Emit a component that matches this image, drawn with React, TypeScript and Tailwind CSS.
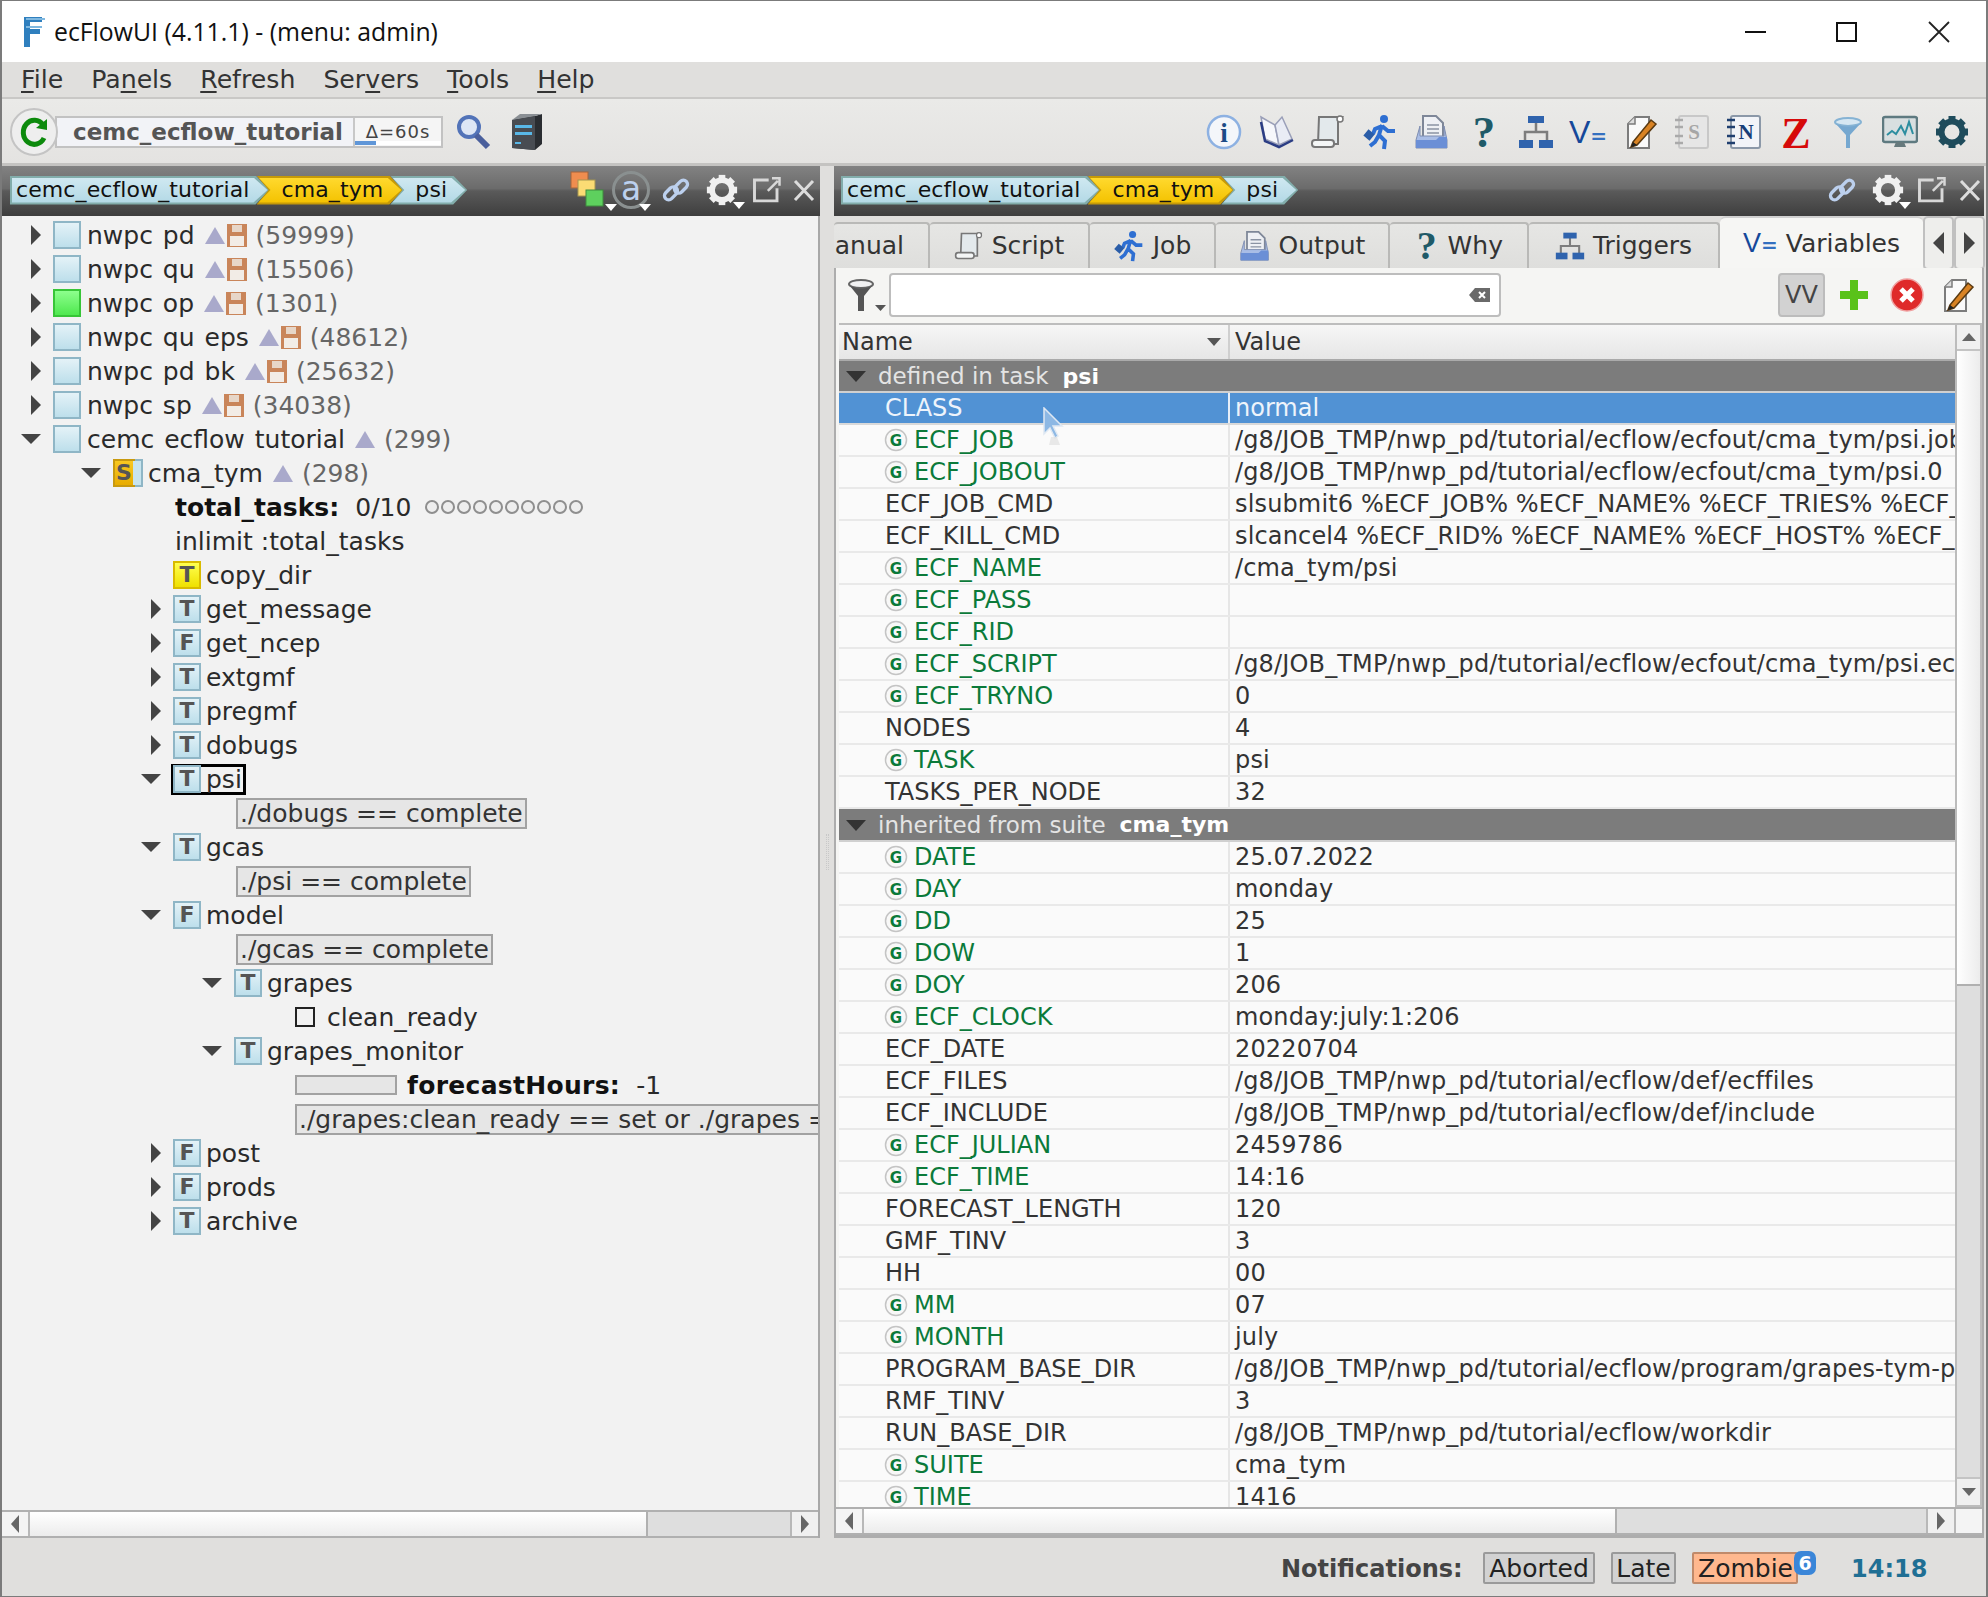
import type { ReactNode } from "react";

const SANS = "font-['DejaVu_Sans','Liberation_Sans',sans-serif]";

// ---------- small drawing helpers ----------

function Tri({ dir, w, h, color = "#444" }: { dir: "r" | "l" | "d" | "u"; w: number; h: number; color?: string }) {
  const pts = {
    r: `0,0 ${w},${h / 2} 0,${h}`,
    l: `${w},0 0,${h / 2} ${w},${h}`,
    d: `0,0 ${w},0 ${w / 2},${h}`,
    u: `0,${h} ${w},${h} ${w / 2},0`,
  }[dir];
  return (
    <svg width={w} height={h} className="shrink-0">
      <polygon points={pts} fill={color} />
    </svg>
  );
}

function Ico({ size = 36, children }: { size?: number; children: ReactNode }) {
  return (
    <svg width={size} height={size} viewBox="0 0 36 36" className="shrink-0">
      {children}
    </svg>
  );
}

function InfoIcon() {
  return (
    <Ico>
      <circle cx="18" cy="18" r="16" fill="#f4f6fa" stroke="#8db1e2" strokeWidth="2.5" />
      <text x="18" y="28" textAnchor="middle" fontFamily="Liberation Serif" fontWeight="700" fontSize="27" fill="#1d4b86">i</text>
    </Ico>
  );
}

function BookIcon() {
  return (
    <Ico>
      <path d="M3 3 L17 11 L21 31 L7 25 Z" fill="#f6f7fb" stroke="#9a9fb8" strokeWidth="1.5" />
      <path d="M17 11 L24 3 L34 25 L21 31 Z" fill="#e9ecf5" stroke="#9a9fb8" strokeWidth="1.5" />
      <path d="M3 8 L7 27 L21 33 L35 26" fill="none" stroke="#2b3d84" strokeWidth="2.5" />
    </Ico>
  );
}

function ScrollIcon({ size }: { size?: number }) {
  return (
    <Ico size={size}>
      <path d="M9 3 H32 L28 8 V30 H8 Z" fill="#e3e9ec" stroke="#777" strokeWidth="2" />
      <rect x="2" y="26" width="22" height="7" rx="3" fill="#f4f6f6" stroke="#777" strokeWidth="2" />
      <circle cx="30" cy="5" r="3" fill="#fff" stroke="#777" strokeWidth="1.5" />
    </Ico>
  );
}

function RunIcon({ size }: { size?: number }) {
  return (
    <Ico size={size}>
      <circle cx="22" cy="5" r="4" fill="#2e6fd2" />
      <path d="M20 11 L17 21 L23 27 L22 35 M17 21 L13 28 L8 32 M20 12 L26 17 L33 17 M20 12 L13 15 L11 20" fill="none" stroke="#2e6fd2" strokeWidth="4" />
      <rect x="3" y="17" width="8" height="8" transform="rotate(40 7 21)" fill="#2a5da8" />
    </Ico>
  );
}

function OutputIcon({ size }: { size?: number }) {
  return (
    <Ico size={size}>
      <path d="M9 2 H22 L29 9 V24 H9 Z" fill="#eef0f4" stroke="#7e8798" strokeWidth="2" />
      <path d="M13 11 H25 M13 15 H25 M13 19 H25" stroke="#8a93a3" strokeWidth="1.5" />
      <path d="M6 12 V22 H30 V12 L33 26 V34 H2 V26 Z" fill="#a9bde6" stroke="#7e8db0" strokeWidth="1" />
      <path d="M2 26 H22 L25 23 H33 V34 H2 Z" fill="#6b8fd6" />
    </Ico>
  );
}

function WhyIcon({ size = 36 }: { size?: number }) {
  return (
    <span
      className="flex shrink-0 items-center justify-center font-['Liberation_Serif',serif] font-bold text-[#1f5a68]"
      style={{ width: size * 0.8, height: size, fontSize: size * 1.25, lineHeight: 1 }}
    >
      ?
    </span>
  );
}

function TreeIcon({ size }: { size?: number }) {
  return (
    <Ico size={size}>
      <path d="M18 8 V18 M7 28 V18 H29 V28" fill="none" stroke="#7d7d7d" strokeWidth="2.5" />
      <rect x="10" y="2" width="16" height="7" fill="#2f63ad" />
      <rect x="1" y="26" width="14" height="8" fill="#2f63ad" />
      <rect x="21" y="26" width="14" height="8" fill="#2f63ad" />
    </Ico>
  );
}

function VarIcon({ small }: { small?: boolean }) {
  return (
    <span className={`flex shrink-0 items-baseline text-[#15489a] ${small ? "text-[27px]" : "text-[32px]"} leading-none`}>
      <span className="font-['Liberation_Sans',sans-serif]">V</span>
      <span className="text-[20px] font-bold text-[#3470c0]">=</span>
    </span>
  );
}

function EditIcon() {
  return (
    <Ico>
      <path d="M6 10 L13 3 H27 V34 H6 Z" fill="#fafafa" stroke="#7c7c7c" strokeWidth="2" />
      <path d="M6 10 H13 V3" fill="#ddd" stroke="#7c7c7c" strokeWidth="1.5" />
      <path d="M11 28 L29 6 L34 10 L15 31 L9 33 Z" fill="#d98324" stroke="#5a3a12" strokeWidth="1.5" />
      <path d="M9 33 L11 28 L15 31 Z" fill="#222" />
    </Ico>
  );
}

function NoteIcon({ letter, dark }: { letter: string; dark?: boolean }) {
  return (
    <Ico>
      <rect x="5" y="2" width="29" height="32" rx="2" fill={dark ? "#f2f4f8" : "#e6e6e6"} stroke={dark ? "#8b98a8" : "#c8c8c8"} strokeWidth="2" />
      {[6, 13, 22, 29].map((y) => (
        <path key={y} d={`M1 ${y} H9`} stroke={dark ? "#1f3f6f" : "#aaaaaa"} strokeWidth="2.5" />
      ))}
      <text x="20" y="25" textAnchor="middle" fontFamily="Liberation Serif" fontWeight="700" fontSize="21" fill={dark ? "#183e78" : "#a6a6a6"}>
        {letter}
      </text>
    </Ico>
  );
}

function ZIcon() {
  return (
    <Ico>
      <text x="18" y="34" textAnchor="middle" fontFamily="Liberation Serif" fontWeight="700" fontSize="44" fill="#d60a0a">Z</text>
    </Ico>
  );
}

function FunnelIcon() {
  return (
    <Ico>
      <ellipse cx="18" cy="8" rx="13" ry="4" fill="#d6e7f2" stroke="#86b3d4" strokeWidth="2" />
      <path d="M6 10 L16 21 V34 H20 V21 L30 10 Q18 15 6 10 Z" fill="#76a8d0" />
    </Ico>
  );
}

function MonitorIcon() {
  return (
    <Ico>
      <rect x="1" y="3" width="34" height="25" rx="2" fill="#d8dfe0" stroke="#5e7a80" strokeWidth="2.5" />
      <path d="M5 21 L10 17 L14 20 L19 12 L23 20 L27 8 L31 20" fill="none" stroke="#2c8ea0" strokeWidth="2" />
      <path d="M14 28 H22 L24 33 H12 Z" fill="#66797c" />
    </Ico>
  );
}

function GearIcon({ color = "#1f4c5c", size }: { color?: string; size?: number }) {
  return (
    <Ico size={size}>
      {[0, 45, 90, 135, 180, 225, 270, 315].map((a) => (
        <rect key={a} x="14.5" y="2" width="7" height="7" fill={color} transform={`rotate(${a} 18 18)`} />
      ))}
      <circle cx="18" cy="18" r="10.5" fill="none" stroke={color} strokeWidth="6" />
    </Ico>
  );
}

function LinkIcon() {
  return (
    <Ico size={30}>
      <g fill="none" stroke="#bcd0ee" strokeWidth="4">
        <rect x="3" y="17" width="18" height="10" rx="5" transform="rotate(-45 12 22)" />
        <rect x="15" y="9" width="18" height="10" rx="5" transform="rotate(-45 24 14)" />
      </g>
    </Ico>
  );
}

function PopoutIcon() {
  return (
    <Ico size={30}>
      <path d="M20 6 H3 V31 H30 V16" fill="none" stroke="#d8d8d8" strokeWidth="3.5" />
      <path d="M19 19 L31 7 M24 4 H33 V13" fill="none" stroke="#d8d8d8" strokeWidth="3" />
    </Ico>
  );
}

function CloseX() {
  return (
    <svg width="22" height="24" viewBox="0 0 22 24" className="shrink-0">
      <path d="M2 3 L20 22 M20 3 L2 22" stroke="#dcdcdc" strokeWidth="3" />
    </svg>
  );
}

function MiniMenu() {
  return (
    <span className="absolute right-[-6px] bottom-[-2px]">
      <Tri dir="d" w={12} h={7} color="#fff" />
    </span>
  );
}

function FilterStackIcon() {
  return (
    <span className="relative h-[38px] w-[42px] shrink-0">
      <svg width="42" height="38" viewBox="0 0 42 38">
        <rect x="2" y="1" width="17" height="16" fill="#f08d4f" stroke="#a3653c" />
        <rect x="9" y="9" width="17" height="16" fill="#fbdc74" stroke="#a59550" />
        <rect x="17" y="19" width="17" height="16" fill="#5ed05e" stroke="#3e8c3e" />
      </svg>
      <MiniMenu />
    </span>
  );
}

function AtIcon() {
  return (
    <span className="relative flex h-[38px] w-[38px] shrink-0 items-center justify-center rounded-full border-[3px] border-[#8a9090]">
      <span className="mb-[4px] text-[33px] leading-none text-[#bcd0ee]">a</span>
      <span className="absolute right-[-4px] bottom-[-5px]">
        <Tri dir="d" w={12} h={7} color="#fff" />
      </span>
    </span>
  );
}

function GBadge() {
  return (
    <svg width="24" height="24" viewBox="0 0 24 24" className="shrink-0">
      <circle cx="12" cy="12" r="10.5" fill="#f8f8f8" stroke="#c4c4c4" strokeWidth="1.5" />
      <text x="12" y="17.5" textAnchor="middle" fontFamily="DejaVu Sans" fontWeight="700" fontSize="15" fill="#0b7a3a">G</text>
    </svg>
  );
}

function Triangle() {
  return <Tri dir="u" w={20} h={17} color="#a9a9cb" />;
}

function Floppy() {
  return (
    <svg width="20" height="23" viewBox="0 0 20 23" className="shrink-0">
      <rect width="20" height="23" fill="#c9855a" />
      <rect x="5" y="1" width="10" height="7" fill="#e7d6c8" />
      <rect x="3" y="12" width="14" height="10" fill="#f2ece6" />
    </svg>
  );
}

// ---------- breadcrumb ----------

function Crumb({ label, yellow, first }: { label: string; yellow?: boolean; first?: boolean }) {
  const shape = first
    ? "[clip-path:polygon(0_0,calc(100%-14px)_0,100%_50%,calc(100%-14px)_100%,0_100%)]"
    : "[clip-path:polygon(0_0,calc(100%-14px)_0,100%_50%,calc(100%-14px)_100%,0_100%,12px_50%)]";
  return (
    <div className={`relative flex h-[29px] items-center ${first ? "pr-[20px] pl-[6px]" : "-ml-[13px] pr-[20px] pl-[25px]"} ${yellow ? "bg-[#c69a08]" : "bg-[#82adab]"} ${shape}`}>
      <div className={`absolute inset-[2px] ${shape} ${yellow ? "bg-[linear-gradient(#ffd92e,#f4c200)]" : "bg-[linear-gradient(#cfe8f1,#b3d9e6)]"}`} />
      <span className="relative text-[22px] leading-none tracking-[0.1px] whitespace-pre text-[#111]">{label}</span>
    </div>
  );
}

function Breadcrumb() {
  return (
    <div className="flex items-center">
      <Crumb first label="cemc_ecflow_tutorial" />
      <Crumb yellow label="cma_tym" />
      <Crumb label="psi" />
    </div>
  );
}

const HEADER_BG = "bg-[linear-gradient(#828282,#6b6b6b_45%,#5a5a5a_50%,#3e3e3e)]";

// ---------- tree ----------

function NodeBox({ letter, tone = "blue" }: { letter?: string; tone?: "blue" | "green" | "yellow" }) {
  const tones = {
    blue: "border-[#8fb6c6] bg-[linear-gradient(#e4f2f7,#bddfeb)]",
    green: "border-[#37c537] bg-[linear-gradient(#8dff8d,#4fe84f)]",
    yellow: "border-[#d9bb00] bg-[linear-gradient(#ffff50,#efe000)]",
  };
  return (
    <span className={`flex h-[28px] w-[28px] shrink-0 items-center justify-center border-2 ${tones[tone]} text-[22px] leading-none font-bold text-[#555]`}>
      {letter}
    </span>
  );
}

function Arrow({ kind }: { kind: "r" | "d" }) {
  return (
    <span className="flex w-[32px] shrink-0 items-center justify-end pr-[12px]">
      {kind === "r" ? <Tri dir="r" w={10} h={20} color="#444" /> : <Tri dir="d" w={20} h={10} color="#444" />}
    </span>
  );
}

function Row({ pad, children }: { pad: string; children: ReactNode }) {
  return <div className={`flex h-[34px] shrink-0 items-center whitespace-pre ${pad}`}>{children}</div>;
}

function ServerRow({ name, count, open, tone, floppy = true }: { name: string; count: string; open?: boolean; tone?: "blue" | "green"; floppy?: boolean }) {
  return (
    <Row pad="pl-[19px]">
      <Arrow kind={open ? "d" : "r"} />
      <NodeBox tone={tone} />
      <span className="ml-[6px] [word-spacing:2px]">{name}</span>
      <span className="ml-[10px] flex items-center gap-[2px]">
        <Triangle />
        {floppy && <Floppy />}
      </span>
      <span className="ml-[9px] text-[#666]">{count}</span>
    </Row>
  );
}

function NodeRow({ pad, letter, name, open }: { pad: string; letter: string; name: string; open?: boolean }) {
  return (
    <Row pad={pad}>
      <Arrow kind={open ? "d" : "r"} />
      <NodeBox letter={letter} />
      <span className="ml-[5px]">{name}</span>
    </Row>
  );
}

function Trigger({ pad, text }: { pad: string; text: string }) {
  return (
    <Row pad={pad}>
      <span className="flex h-[31px] shrink-0 items-center border-2 border-[#a2a2a2] bg-[#e6e6e6] px-[2px] text-[#333]">{text}</span>
    </Row>
  );
}

function HScroll({ thumb, corner }: { thumb: string; corner?: boolean }) {
  return (
    <div className="flex h-[28px] shrink-0 border-y-2 border-[#b0b0b0] bg-[#dedede]">
      <span className="flex w-[28px] items-center justify-center border-r-2 border-[#b8b8b8] bg-[#f4f4f4]">
        <Tri dir="l" w={8} h={18} color="#666" />
      </span>
      <span className={`border-r-2 border-[#b0b0b0] bg-[linear-gradient(#ffffff,#ececec)] ${thumb}`} />
      <span className="flex-1" />
      <span className="flex w-[28px] items-center justify-center border-l-2 border-[#b8b8b8] bg-[#f0f0f0]">
        <Tri dir="r" w={8} h={18} color="#666" />
      </span>
      {corner && <span className="w-[28px] border-l-2 border-[#b8b8b8] bg-[#f4f4f4]" />}
    </div>
  );
}

function TreePanel() {
  return (
    <div className="flex w-[818px] shrink-0 flex-col">
      <div className={`flex h-[50px] shrink-0 items-center ${HEADER_BG} pr-[5px] pb-[2px] pl-[8px]`}>
        <Breadcrumb />
        <div className="ml-auto flex items-center">
          <FilterStackIcon />
          <span className="ml-[1px]">
            <AtIcon />
          </span>
          <span className="ml-[11px]">
            <LinkIcon />
          </span>
          <span className="relative ml-[14px]">
            <GearIcon color="#f0f0f0" size={34} />
            <MiniMenu />
          </span>
          <span className="ml-[13px]">
            <PopoutIcon />
          </span>
          <span className="ml-[11px]">
            <CloseX />
          </span>
        </div>
      </div>
      <div className="flex min-h-0 flex-1 flex-col overflow-hidden border-r-2 border-[#a8a8a8] bg-[#f2f2f2] pt-[2px] text-[25px] leading-none text-[#2a2a2a]">
        <ServerRow name="nwpc pd" count="(59999)" />
        <ServerRow name="nwpc qu" count="(15506)" />
        <ServerRow name="nwpc op" count="(1301)" tone="green" />
        <ServerRow name="nwpc qu eps" count="(48612)" />
        <ServerRow name="nwpc pd bk" count="(25632)" />
        <ServerRow name="nwpc sp" count="(34038)" />
        <ServerRow name="cemc ecflow tutorial" count="(299)" open floppy={false} />
        <Row pad="pl-[79px]">
          <Arrow kind="d" />
          <span className="flex h-[28px] w-[30px] shrink-0 items-stretch border-2 border-[#8fb6c6]">
            <span className="flex w-[18px] items-center justify-center bg-[linear-gradient(#f8c820,#e8ac00)] text-[22px] font-bold text-[#555] outline-2 outline-[#c89a10]">S</span>
            <span className="flex-1 bg-[#c8e4ee]" />
          </span>
          <span className="ml-[5px]">cma_tym</span>
          <span className="ml-[10px]">
            <Triangle />
          </span>
          <span className="ml-[9px] text-[#666]">(298)</span>
        </Row>
        <Row pad="pl-[173px]">
          <span className="font-bold text-[#111]">total_tasks:</span>
          <span className="ml-[16px]">0/10</span>
          <span className="ml-[14px] flex gap-[2px]">
            {[0, 1, 2, 3, 4, 5, 6, 7, 8, 9].map((i) => (
              <span key={i} className="h-[14px] w-[14px] rounded-full border-2 border-[#8f8f8f] bg-[#eeeeee]" />
            ))}
          </span>
        </Row>
        <Row pad="pl-[173px]">
          <span>inlimit :total_tasks</span>
        </Row>
        <Row pad="pl-[171px]">
          <NodeBox letter="T" tone="yellow" />
          <span className="ml-[5px]">copy_dir</span>
        </Row>
        <NodeRow pad="pl-[139px]" letter="T" name="get_message" />
        <NodeRow pad="pl-[139px]" letter="F" name="get_ncep" />
        <NodeRow pad="pl-[139px]" letter="T" name="extgmf" />
        <NodeRow pad="pl-[139px]" letter="T" name="pregmf" />
        <NodeRow pad="pl-[139px]" letter="T" name="dobugs" />
        <Row pad="pl-[139px]">
          <Arrow kind="d" />
          <span className="-ml-[2px] flex h-[31px] items-center border-[3px] border-black pr-[1px]">
            <span className="-ml-[1px]">
              <NodeBox letter="T" />
            </span>
            <span className="ml-[5px]">psi</span>
          </span>
        </Row>
        <Trigger pad="pl-[234px]" text="./dobugs == complete" />
        <NodeRow pad="pl-[139px]" letter="T" name="gcas" open />
        <Trigger pad="pl-[234px]" text="./psi == complete" />
        <NodeRow pad="pl-[139px]" letter="F" name="model" open />
        <Trigger pad="pl-[234px]" text="./gcas == complete" />
        <NodeRow pad="pl-[200px]" letter="T" name="grapes" open />
        <Row pad="pl-[293px]">
          <span className="h-[20px] w-[20px] shrink-0 border-2 border-[#222] bg-[#f2f2f2]" />
          <span className="ml-[12px]">clean_ready</span>
        </Row>
        <NodeRow pad="pl-[200px]" letter="T" name="grapes_monitor" open />
        <Row pad="pl-[293px]">
          <span className="h-[20px] w-[102px] shrink-0 border-2 border-[#a2a2a2] bg-[#e6e6e6]" />
          <span className="ml-[10px] font-bold tracking-[0.3px] text-[#111]">forecastHours:</span>
          <span className="ml-[16px]">-1</span>
        </Row>
        <Trigger pad="pl-[293px]" text="./grapes:clean_ready == set or ./grapes == complete" />
        <NodeRow pad="pl-[139px]" letter="F" name="post" />
        <NodeRow pad="pl-[139px]" letter="F" name="prods" />
        <NodeRow pad="pl-[139px]" letter="T" name="archive" />
      </div>
      <div className="border-r-2 border-[#a8a8a8]">
        <HScroll thumb="w-[618px]" />
      </div>
    </div>
  );
}

// ---------- variables panel ----------

type Variable = { name: string; value?: string; gen?: boolean };

const defined: Variable[] = [
  { name: "ECF_JOB", value: "/g8/JOB_TMP/nwp_pd/tutorial/ecflow/ecfout/cma_tym/psi.job", gen: true },
  { name: "ECF_JOBOUT", value: "/g8/JOB_TMP/nwp_pd/tutorial/ecflow/ecfout/cma_tym/psi.0", gen: true },
  { name: "ECF_JOB_CMD", value: "slsubmit6 %ECF_JOB% %ECF_NAME% %ECF_TRIES% %ECF_TRYNO% %ECF_HOST%" },
  { name: "ECF_KILL_CMD", value: "slcancel4 %ECF_RID% %ECF_NAME% %ECF_HOST% %ECF_PORT%" },
  { name: "ECF_NAME", value: "/cma_tym/psi", gen: true },
  { name: "ECF_PASS", gen: true },
  { name: "ECF_RID", gen: true },
  { name: "ECF_SCRIPT", value: "/g8/JOB_TMP/nwp_pd/tutorial/ecflow/ecfout/cma_tym/psi.ecf", gen: true },
  { name: "ECF_TRYNO", value: "0", gen: true },
  { name: "NODES", value: "4" },
  { name: "TASK", value: "psi", gen: true },
  { name: "TASKS_PER_NODE", value: "32" },
];

const inherited: Variable[] = [
  { name: "DATE", value: "25.07.2022", gen: true },
  { name: "DAY", value: "monday", gen: true },
  { name: "DD", value: "25", gen: true },
  { name: "DOW", value: "1", gen: true },
  { name: "DOY", value: "206", gen: true },
  { name: "ECF_CLOCK", value: "monday:july:1:206", gen: true },
  { name: "ECF_DATE", value: "20220704" },
  { name: "ECF_FILES", value: "/g8/JOB_TMP/nwp_pd/tutorial/ecflow/def/ecffiles" },
  { name: "ECF_INCLUDE", value: "/g8/JOB_TMP/nwp_pd/tutorial/ecflow/def/include" },
  { name: "ECF_JULIAN", value: "2459786", gen: true },
  { name: "ECF_TIME", value: "14:16", gen: true },
  { name: "FORECAST_LENGTH", value: "120" },
  { name: "GMF_TINV", value: "3" },
  { name: "HH", value: "00" },
  { name: "MM", value: "07", gen: true },
  { name: "MONTH", value: "july", gen: true },
  { name: "PROGRAM_BASE_DIR", value: "/g8/JOB_TMP/nwp_pd/tutorial/ecflow/program/grapes-tym-pre" },
  { name: "RMF_TINV", value: "3" },
  { name: "RUN_BASE_DIR", value: "/g8/JOB_TMP/nwp_pd/tutorial/ecflow/workdir" },
  { name: "SUITE", value: "cma_tym", gen: true },
  { name: "TIME", value: "1416", gen: true },
];

function VarRow({ v }: { v: Variable }) {
  return (
    <div className="flex h-[32px] shrink-0 border-b-2 border-[#e9e9e9] bg-[#fafafa] leading-none whitespace-pre">
      <div className="flex w-[391px] shrink-0 items-center border-r-2 border-[#e6e6e6] pl-[45px]">
        {v.gen ? (
          <>
            <GBadge />
            <span className="ml-[6px] text-[#0b7a3a]">{v.name}</span>
          </>
        ) : (
          <span className="ml-[1px] text-[#333]">{v.name}</span>
        )}
      </div>
      <div className="flex min-w-0 flex-1 items-center overflow-hidden pl-[5px] tracking-[0.15px] text-[#333]">{v.value}</div>
    </div>
  );
}

function GroupRow({ label, name, h }: { label: string; name: string; h: string }) {
  return (
    <div className={`flex shrink-0 items-center border-b-2 border-[#d0d0d0] bg-[#7c7c7c] pt-[1px] pl-[7px] text-[23px] leading-none text-[#e4e4e4] ${h}`}>
      <Tri dir="d" w={20} h={11} color="#333" />
      <span className="ml-[12px] whitespace-pre">{label}</span>
      <span className="ml-[14px] text-[22px] font-bold text-white">{name}</span>
    </div>
  );
}

function Tab({ w, icon, label }: { w: string; icon?: ReactNode; label: string }) {
  return (
    <div className={`flex h-[46px] shrink-0 items-center justify-center gap-[8px] rounded-t-[4px] border-t-2 border-r-2 border-[#b9b9b7] bg-[linear-gradient(#e6e6e4,#dededc)] pb-[1px] ${w}`}>
      {icon}
      <span>{label}</span>
    </div>
  );
}

function VariablesPanel() {
  return (
    <div className="flex min-w-0 flex-1 flex-col">
      <div className={`flex h-[50px] shrink-0 items-center ${HEADER_BG} pr-[3px] pb-[2px] pl-[7px]`}>
        <Breadcrumb />
        <div className="ml-auto flex items-center">
          <LinkIcon />
          <span className="relative ml-[14px]">
            <GearIcon color="#f0f0f0" size={34} />
            <MiniMenu />
          </span>
          <span className="ml-[12px]">
            <PopoutIcon />
          </span>
          <span className="ml-[12px]">
            <CloseX />
          </span>
        </div>
      </div>
      <div className="flex h-[52px] shrink-0 items-end text-[25px] leading-none text-[#333]">
        <div className="flex h-[46px] w-[96px] shrink-0 items-center justify-end overflow-hidden rounded-t-[4px] border-t-2 border-r-2 border-[#b9b9b7] bg-[linear-gradient(#e6e6e4,#dededc)] pr-[24px] pb-[1px]">
          <span>anual</span>
        </div>
        <Tab w="w-[160px]" icon={<ScrollIcon size={30} />} label="Script" />
        <Tab w="w-[126px]" icon={<RunIcon size={32} />} label="Job" />
        <Tab w="w-[174px]" icon={<OutputIcon size={32} />} label="Output" />
        <Tab w="w-[139px]" icon={<WhyIcon size={32} />} label="Why" />
        <Tab w="w-[191px]" icon={<TreeIcon size={30} />} label="Triggers" />
        <div className="flex h-[52px] w-[203px] shrink-0 items-center justify-center gap-[8px] rounded-t-[6px] border-t-2 border-[#d0d0d0] bg-[#f6f6f4]">
          <VarIcon small />
          <span>Variables</span>
        </div>
        <div className="mb-[-2px] flex h-[54px] w-[31px] shrink-0 items-center justify-center rounded-[5px] border-2 border-[#c0c0c0] bg-[#eeeeec]">
          <Tri dir="l" w={11} h={22} color="#444" />
        </div>
        <div className="mb-[-2px] flex h-[54px] w-[31px] shrink-0 items-center justify-center rounded-[5px] border-2 border-[#c0c0c0] bg-[#eeeeec]">
          <Tri dir="r" w={11} h={22} color="#444" />
        </div>
      </div>
      <div className="flex min-h-0 flex-1 flex-col border-x-2 border-b-[3px] border-[#adadad] bg-[#f5f5f3]">
        <div className="flex h-[55px] shrink-0 items-center pb-[2px]">
          <span className="relative ml-[11px] flex w-[42px] items-center">
            <svg width="36" height="36" viewBox="0 0 36 36">
              <ellipse cx="14" cy="7" rx="12" ry="4" fill="#f2f2f2" stroke="#666" strokeWidth="2" />
              <path d="M3 9 L11 19 V34 H17 V19 L25 9 Q14 14 3 9 Z" fill="#555" />
            </svg>
            <span className="absolute right-[3px] bottom-[2px]">
              <Tri dir="d" w={11} h={6} color="#555" />
            </span>
          </span>
          <div className="ml-[0px] flex h-[44px] w-[612px] items-center justify-end rounded-[4px] border-2 border-[#bdbdbd] bg-white pr-[8px]">
            <svg width="22" height="16" viewBox="0 0 22 16">
              <path d="M6 1 H21 V15 H6 L0 8 Z" fill="#6a6a6a" />
              <path d="M10 5 L16 11 M16 5 L10 11" stroke="#fff" strokeWidth="2" />
            </svg>
          </div>
          <div className="ml-[277px] flex h-[44px] w-[47px] items-center justify-center rounded-[4px] border-2 border-[#bcbcbc] bg-[#d2d2d2] text-[24px] leading-none text-[#444]">VV</div>
          <svg width="30" height="34" viewBox="0 0 30 34" className="ml-[14px]">
            <path d="M11 2 H19 V13 H29 V21 H19 V32 H11 V21 H1 V13 H11 Z" fill="#5ac21a" />
          </svg>
          <svg width="34" height="34" viewBox="0 0 34 34" className="ml-[21px]">
            <circle cx="17" cy="17" r="16" fill="#df2a2a" stroke="#f0a0a0" strokeWidth="1.5" />
            <path d="M11 11 L23 23 M23 11 L11 23" stroke="#fff" strokeWidth="5" />
          </svg>
          <span className="ml-[15px]">
            <EditIcon />
          </span>
        </div>
        <div className="flex min-h-0 flex-1">
          <div className="relative flex min-w-0 flex-1 flex-col overflow-hidden pl-[3px] text-[24px]">
            <div className="flex h-[38px] shrink-0 border-y-2 border-t-[#bdbdbd] border-b-[#aaaaaa] bg-[linear-gradient(#f6f6f6,#e6e6e6)] leading-none text-[#333]">
              <div className="flex w-[391px] shrink-0 items-center justify-between border-r-2 border-[#cfcfcf] pr-[7px] pl-[3px]">
                <span>Name</span>
                <Tri dir="d" w={14} h={8} color="#555" />
              </div>
              <div className="flex items-center pl-[5px]">Value</div>
            </div>
            <GroupRow label="defined in task" name="psi" h="h-[32px]" />
            <div className="flex h-[30px] shrink-0 bg-[#5192d4] leading-none text-[#eef4fb]">
              <div className="flex w-[391px] shrink-0 items-center border-r-2 border-[#e6eef8] pl-[46px]">CLASS</div>
              <div className="flex items-center pl-[5px]">normal</div>
            </div>
            <div className="h-[2px] shrink-0 bg-[#d9d9d9]" />
            {defined.map((v) => (
              <VarRow key={v.name} v={v} />
            ))}
            <GroupRow label="inherited from suite" name="cma_tym" h="h-[33px]" />
            {inherited.map((v) => (
              <VarRow key={v.name} v={v} />
            ))}
            {/* mouse pointer caught by the screenshot */}
            <svg width="24" height="40" viewBox="0 0 24 40" className="absolute top-[84px] left-[207px]">
              <path d="M1 1 V27 L7 21 L12 31 L15 29 L10 19 L19 19 Z" fill="#8db8e4" stroke="#dfe8f2" strokeWidth="1.5" />
              <path d="M8 30 L14 30 L17 38 L6 38 Z" fill="#dcdcdc" opacity="0.6" />
            </svg>
          </div>
          <div className="flex w-[27px] shrink-0 flex-col border-x-2 border-y-2 border-[#bcbcbc] bg-[#dedede]">
            <span className="flex h-[26px] shrink-0 items-center justify-center border-b-2 border-[#c4c4c4] bg-[#f0f0f0]">
              <Tri dir="u" w={14} h={8} color="#666" />
            </span>
            <span className="h-[635px] shrink-0 border-b-2 border-[#b0b0b0] bg-[linear-gradient(90deg,#ffffff,#ececec)]" />
            <span className="flex-1" />
            <span className="flex h-[28px] shrink-0 items-center justify-center border-t-2 border-[#c4c4c4] bg-[#f0f0f0]">
              <Tri dir="d" w={14} h={8} color="#666" />
            </span>
          </div>
        </div>
        <HScroll thumb="w-[753px]" corner />
      </div>
    </div>
  );
}

// ---------- chrome ----------

function StatusButton({ label, w }: { label: string; w: string }) {
  return (
    <span className={`flex h-[32px] items-center justify-center rounded-[2px] border-2 border-[#9a9a9a] bg-[#d2d2d2] text-[#222] ${w}`}>{label}</span>
  );
}

export default function App() {
  return (
    <div className={`flex h-[1597px] w-[1988px] flex-col overflow-hidden border-x-2 border-y border-[#7b7b7b] bg-[#e0dfdd] ${SANS}`}>
      <div className="flex h-[61px] shrink-0 items-center bg-white">
        <svg width="24" height="34" viewBox="0 0 24 34" className="ml-[19px]">
          <path d="M3 2 H21 V7 H9 V14 H19 V19 H9 V32 H3 Z" fill="#2f7fbe" />
          <path d="M5 4 H24 M5 12 H21" stroke="#7fb8e0" strokeWidth="2" />
        </svg>
        <span className="ml-[9px] font-['Open_Sans',sans-serif] text-[24.8px] leading-none text-[#111]">ecFlowUI (4.11.1) - (menu: admin)</span>
        <div className="ml-auto flex items-center">
          <span className="h-[2px] w-[21px] bg-[#111]" />
          <span className="ml-[70px] h-[20px] w-[21px] border-2 border-[#111]" />
          <svg width="22" height="22" viewBox="0 0 22 22" className="mr-[36px] ml-[71px]">
            <path d="M1 1 L21 21 M21 1 L1 21" stroke="#222" strokeWidth="1.8" />
          </svg>
        </div>
      </div>

      <div className="flex h-[37px] shrink-0 items-center gap-[28px] border-b-2 border-[#c9c8c6] pl-[19px] text-[25.2px] leading-none text-[#333]">
        <span><u className="underline-offset-[3px]">F</u>ile</span>
        <span>Pa<u className="underline-offset-[3px]">n</u>els</span>
        <span><u className="underline-offset-[3px]">R</u>efresh</span>
        <span>Ser<u className="underline-offset-[3px]">v</u>ers</span>
        <span><u className="underline-offset-[3px]">T</u>ools</span>
        <span><u className="underline-offset-[3px]">H</u>elp</span>
      </div>

      <div className="flex h-[67px] shrink-0 items-center border-b-[3px] border-[#c4c3c1] bg-[linear-gradient(#eaeae8,#e4e3e1)] pt-[2px]">
        <div className="relative ml-[8px] flex h-[48px] w-[48px] items-center justify-center rounded-full border-2 border-[#c4c4c4] bg-[#eeeeee]">
          <svg width="30" height="32" viewBox="0 0 30 32">
            <path d="M24 9 A11 12 0 1 0 25 22" fill="none" stroke="#0c8a0c" strokeWidth="5" />
            <path d="M17 12 L28 3 V14 Z" fill="#0c8a0c" />
          </svg>
        </div>
        <div className="-ml-[3px] flex h-[32px] items-center border-2 border-[#c2c2c2] bg-[#f2f3f7]">
          <span className="w-[296px] pl-[16px] text-[23px] leading-none font-bold whitespace-pre text-[#555]">cemc_ecflow_tutorial</span>
          <span className="relative flex h-full w-[88px] items-center justify-center border-l-2 border-[#c8c8c8] bg-[#f5f5f5] text-[18px] leading-none tracking-[1px] text-[#444]">
            Δ=60s
            <span className="absolute right-0 bottom-[1px] left-0 h-[4px] bg-white">
              <span className="block h-full w-[21px] bg-[#5f96d8]" />
            </span>
          </span>
        </div>
        <svg width="36" height="36" viewBox="0 0 36 36" className="ml-[12px]">
          <circle cx="14" cy="13" r="10" fill="#dde6f5" stroke="#5273b8" strokeWidth="4" />
          <path d="M21 21 L33 33" stroke="#4a5f9c" strokeWidth="6" />
        </svg>
        <svg width="32" height="38" viewBox="0 0 32 38" className="ml-[20px]">
          <path d="M1 7 L24 3 L31 1 V31 L24 37 L1 35 Z" fill="#2a2d31" />
          <path d="M1 7 L24 3 L31 1 L9 1 Z" fill="#8a8f94" />
          <path d="M1 7 L24 3 V37 L1 35 Z" fill="#484c52" />
          <rect x="4" y="12" width="17" height="3" fill="#59b8e8" />
          <rect x="4" y="19" width="17" height="3" fill="#59b8e8" />
          <rect x="4" y="29" width="6" height="2" fill="#59b8e8" />
        </svg>
        <div className="mr-[8px] ml-auto flex items-center">
          {[
            <InfoIcon key="info" />,
            <BookIcon key="book" />,
            <ScrollIcon key="scroll" />,
            <RunIcon key="run" />,
            <OutputIcon key="output" />,
            <WhyIcon key="why" />,
            <TreeIcon key="tree" />,
            <VarIcon key="var" />,
            <EditIcon key="edit" />,
            <NoteIcon key="s" letter="S" />,
            <NoteIcon key="n" letter="N" dark />,
            <ZIcon key="z" />,
            <FunnelIcon key="funnel" />,
            <MonitorIcon key="monitor" />,
            <GearIcon key="gear" />,
          ].map((icon) => (
            <span key={icon.key} className="flex h-[36px] w-[52px] items-center justify-center">
              {icon}
            </span>
          ))}
        </div>
      </div>

      <div className="flex min-h-0 flex-1">
        <TreePanel />
        <div className="flex w-[14px] shrink-0 items-center justify-center">
          <span className="h-[36px] w-[3px] border-x border-dotted border-[#c8c8c8]" />
        </div>
        <VariablesPanel />
        <div className="w-[2px] shrink-0" />
      </div>

      <div className="relative flex h-[58px] shrink-0 items-center pt-[3px] text-[25px] leading-none">
        <span className="ml-[1279px] text-[24px] font-semibold text-[#444]">Notifications:</span>
        <div className="absolute top-[14px] left-[1481px] flex items-center gap-[16px]">
          <StatusButton label="Aborted" w="w-[112px]" />
          <StatusButton label="Late" w="w-[65px]" />
          <span className="relative flex h-[32px] w-[106px] items-center justify-start rounded-[2px] border-2 border-[#c08a6a] bg-[#ffb88e] pl-[4px] text-[#222]">
            Zombie
            <span className="absolute top-[-3px] right-[-20px] flex h-[24px] w-[22px] items-center justify-center rounded-[7px] bg-[#3a86d8] text-[19px] font-bold text-white">6</span>
          </span>
        </div>
        <span className="absolute top-[19px] left-[1849px] text-[24px] font-semibold text-[#1f6f94]">14:18</span>
      </div>
    </div>
  );
}
